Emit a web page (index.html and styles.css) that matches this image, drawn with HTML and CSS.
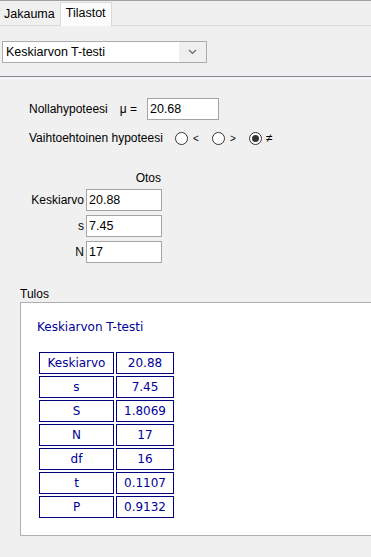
FILE: index.html
```html
<!DOCTYPE html>
<html>
<head>
  <meta charset="UTF-8">
  <title>Tilastot</title>
  <link rel="stylesheet" href="styles.css">
</head>
<body>
  <div class="tabs">
    <div class="tab">Jakauma</div>
    <div class="tab tab-active">Tilastot</div>
  </div>

  <div class="panel">
    <div class="toolbar">
      <div class="combo">
        <span class="combo-text">Keskiarvon T-testi</span>
        <span class="combo-button">
          <svg width="9" height="6" viewBox="0 0 9 6"><path d="M1 1 L4.5 4.5 L8 1" fill="none" stroke="#666" stroke-width="1.2"/></svg>
        </span>
      </div>
    </div>

    <div class="separator"></div>

    <div class="hypothesis">
      <div class="hyp-row">
        <span class="label">Nollahypoteesi</span>
        <span class="mu">μ =</span>
        <input class="field field-mu" type="text" value="20.68">
      </div>
      <div class="hyp-row alt-row">
        <span class="label">Vaihtoehtoinen hypoteesi</span>
        <label class="radio"><input type="radio" name="alt"> &lt;</label>
        <label class="radio"><input type="radio" name="alt"> &gt;</label>
        <label class="radio radio-ne"><input type="radio" name="alt" checked> ≠</label>
      </div>
    </div>

    <div class="sample">
      <span></span><span class="sample-title">Otos</span>
      <span class="sample-label">Keskiarvo</span><input class="field" type="text" value="20.88">
      <span class="sample-label">s</span><input class="field" type="text" value="7.45">
      <span class="sample-label">N</span><input class="field" type="text" value="17">
    </div>

    <div class="result">
      <div class="result-title">Tulos</div>
      <div class="result-box">
        <div class="test-name">Keskiarvon T-testi</div>
        <table class="stats">
          <tr><td>Keskiarvo</td><td>20.88</td></tr>
          <tr><td>s</td><td>7.45</td></tr>
          <tr><td>S</td><td>1.8069</td></tr>
          <tr><td>N</td><td>17</td></tr>
          <tr><td>df</td><td>16</td></tr>
          <tr><td>t</td><td>0.1107</td></tr>
          <tr><td>P</td><td>0.9132</td></tr>
        </table>
      </div>
    </div>
  </div>
</body>
</html>
```

FILE: styles.css
```css
body {
  margin: 0;
  background-color: #f0f0f0;
  font-family: 'Liberation Sans', Arial, sans-serif;
  font-size: 12px;
  color: #000;
  overflow: hidden;
  height: 557px;
}

/* Onglets */
.tabs {
  display: flex;
  align-items: flex-end;
  height: 24px;
  border-top: 1px solid #a0a0a0;
  border-bottom: 1px solid #d9d9d9;
}

.tab {
  height: 21px;
  line-height: 20px;
  padding: 0 4px;
  font-size: 12.5px;
}

.tab-active {
  height: 23px;
  line-height: 21px;
  margin-left: 1px;
  padding: 0 5px;
  background-color: #fcfcfc;
  border: 1px solid #d9d9d9;
  border-bottom: none;
  margin-bottom: -1px;
}

.panel {
  display: flex;
  flex-direction: column;
}

.toolbar {
  padding: 15px 2px 0;
}

.combo {
  display: flex;
  width: 203px;
  height: 20px;
  border: 1px solid #acacac;
  background-color: #fff;
}

.combo-text {
  flex: 1;
  line-height: 20px;
  padding-left: 3px;
  font-size: 12.5px;
}

.combo-button {
  width: 27px;
  background-color: #efefef;
  display: flex;
  align-items: center;
  justify-content: center;
}

.separator {
  margin-top: 13px;
  height: 1px;
  border-top: 1px solid #8b8b98;
  border-bottom: 1px solid #fafafa;
}

/* Hypothèses */
.hypothesis {
  padding: 19px 0 0 29px;
  display: flex;
  flex-direction: column;
  gap: 9px;
}

.hyp-row {
  display: flex;
  align-items: center;
}

.mu {
  margin-left: 12px;
  margin-right: 10px;
}

.field {
  box-sizing: border-box;
  width: 76px;
  height: 22px;
  border: 1px solid #a5a5a5;
  background-color: #fff;
  font-family: 'Liberation Sans', Arial, sans-serif;
  font-size: 12.5px;
  padding: 0 2px;
  margin: 0;
  outline: none;
}

.field-mu {
  width: 72px;
}

.alt-row {
  height: 18px;
}

.alt-row .label {
  margin-right: 12px;
}

.radio {
  display: flex;
  align-items: center;
  gap: 5px;
  width: 37px;
  font-size: 10px;
}

.radio-ne {
  font-size: 12px;
  gap: 4px;
}

.radio input {
  -webkit-appearance: none;
  appearance: none;
  width: 13px;
  height: 13px;
  margin: 0;
  border: 1px solid #333;
  border-radius: 50%;
  background-color: #fff;
  display: flex;
  align-items: center;
  justify-content: center;
}

.radio input:checked::after {
  content: "";
  width: 7px;
  height: 7px;
  border-radius: 50%;
  background-color: #333;
}

/* Échantillon */
.sample {
  display: grid;
  grid-template-columns: 84px 76px;
  column-gap: 2px;
  row-gap: 4px;
  margin-top: 24px;
  align-items: center;
}

.sample-title {
  text-align: right;
  padding-right: 1px;
  height: 14px;
  line-height: 14px;
}

.sample-label {
  text-align: right;
}

/* Résultat */
.result {
  margin-top: 23px;
  padding-left: 20px;
}

.result-title {
  line-height: 16px;
}

.result-box {
  background-color: #fff;
  border: 1px solid #b0b0b0;
  margin-right: -10px;
  padding: 17px 16px 15px;
}

.test-name {
  color: #000099;
  font-family: 'DejaVu Sans', Verdana, sans-serif;
  font-size: 12px;
  margin-bottom: 16px;
}

.stats {
  border-collapse: separate;
  border-spacing: 2px;
  font-family: 'DejaVu Sans', Verdana, sans-serif;
  font-size: 12px;
  color: #000099;
}

.stats td {
  border: 1px solid #000080;
  height: 20px;
  padding: 0;
  text-align: center;
}

.stats td:first-child {
  width: 73px;
}

.stats td:last-child {
  width: 56px;
}
```
